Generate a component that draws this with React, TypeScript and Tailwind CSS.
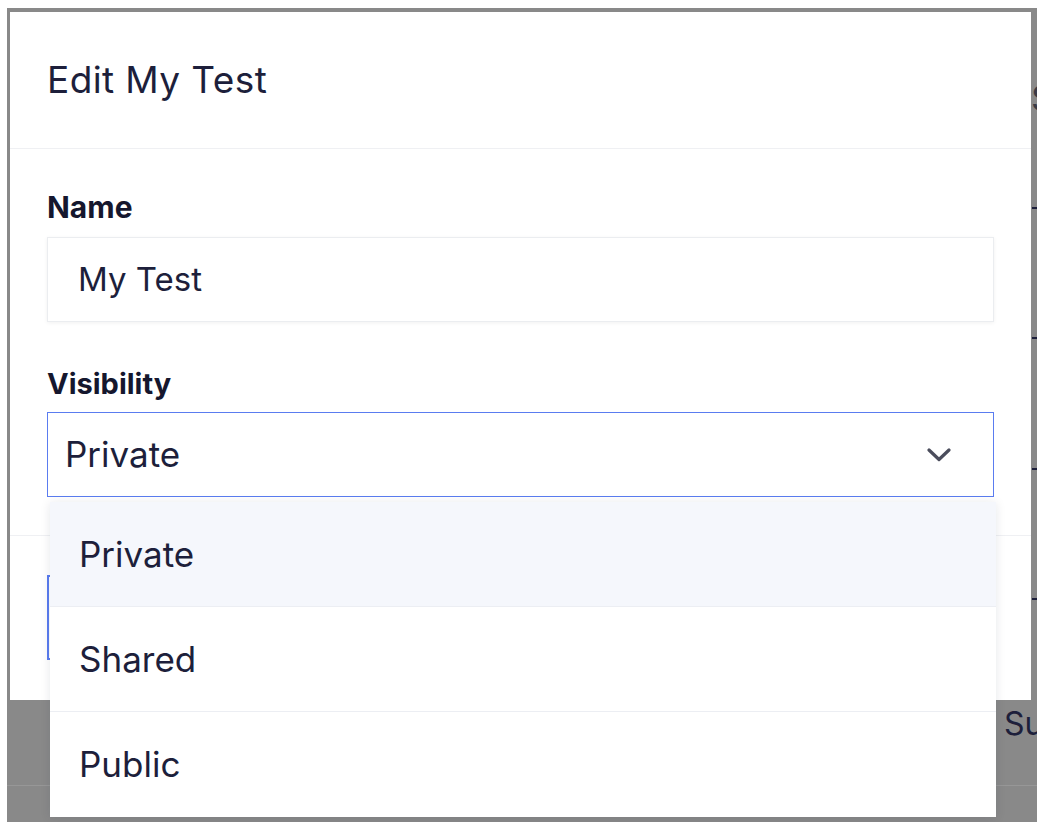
import { useState } from 'react';

const options = ['Private', 'Shared', 'Public'];

const Chevron = () => (
  <svg width="24" height="14" viewBox="0 0 24 14" fill="none" className="mr-[42px]">
    <path d="M2 2l10 9.5L22 2" stroke="#4b4d5c" strokeWidth="3.2" strokeLinecap="round" strokeLinejoin="round" />
  </svg>
);

const VisibilitySelect = () => {
  const [value] = useState('Private');
  return (
    <div className="relative">
      <div className="flex h-[85px] items-center justify-between border-[1.5px] border-[#5a7cf0] bg-white pl-[17px]">
        <span className="text-[35px] text-[#1d1f3b]">{value}</span>
        <Chevron />
      </div>
      <ul className="absolute left-[3px] right-[-2px] top-[90px] z-20 flex flex-col bg-white shadow-[0_1px_10px_rgba(20,25,60,0.10)]">
        {options.map((opt, i) => (
          <li
            key={opt}
            className={
              'flex h-[105px] items-center pl-[29px] text-[35px] text-[#1d1f3b] ' +
              (i === 0 ? 'bg-[#f5f7fc] ' : 'bg-white ') +
              (i < options.length - 1 ? 'border-b border-[#eceef3]' : '')
            }
          >
            {opt}
          </li>
        ))}
      </ul>
    </div>
  );
};

const EditModal = () => (
  <div className="absolute left-[3px] top-[4px] z-10 flex h-[688px] w-[1021px] flex-col bg-white">
    <header className="flex h-[137px] shrink-0 items-center border-b border-[#eff0f3] px-[37px]">
      <h2 className="text-[37px] font-normal tracking-[0.4px] text-[#1d1f3b]">Edit My Test</h2>
    </header>
    <div className="flex flex-col px-[37px] pb-[38px] pt-[41px]">
      <label className="mb-[13px] text-[30px] font-bold leading-[34px] text-[#15172e]">Name</label>
      <div className="flex h-[85px] items-center border border-[#ebedf0] bg-white pl-[30px] shadow-[0_1px_4px_rgba(0,0,0,0.06)]">
        <span className="text-[33px] text-[#1d1f3b]">My Test</span>
      </div>
      <label className="mb-[11px] mt-[45px] text-[29px] font-bold leading-[34px] text-[#15172e]">Visibility</label>
      <VisibilitySelect />
    </div>
    <footer className="flex border-t border-[#eff0f3] px-[37px] pt-[39px]">
      <button className="h-[85px] w-[220px] border-2 border-[#5a7cf0] text-[28px] text-[#5a7cf0]">Cancel</button>
    </footer>
  </div>
);

export default function App() {
  return (
    <div
      className="h-[830px] w-[1044px] overflow-hidden bg-white pl-[7px] pt-[8px]"
      style={{ fontFamily: 'Inter, "Noto Sans", sans-serif' }}
    >
      <div className="relative h-[814px] w-[1030px] overflow-hidden bg-[#898989]">
        {/* dimmed page behind the modal */}
        <span className="absolute left-[1024px] top-[72px] text-[36px] leading-none text-[#3a3a44]">S</span>
        <div className="absolute left-[1025px] top-[199px] h-[2px] w-[6px] bg-[#1d1f3b]" />
        <div className="absolute left-[1025px] top-[329px] h-[2px] w-[6px] bg-[#1d1f3b]" />
        <div className="absolute left-[1025px] top-[460px] h-[2px] w-[6px] bg-[#1d1f3b]" />
        <div className="absolute left-[1025px] top-[590px] h-[2px] w-[6px] bg-[#1d1f3b]" />
        <span className="absolute left-[997px] top-[700px] text-[32px] leading-none text-[#1d1f3b]">Su</span>
        <div className="absolute left-0 right-0 top-[777px] h-px bg-[#979797]" />
        <EditModal />
      </div>
    </div>
  );
}
